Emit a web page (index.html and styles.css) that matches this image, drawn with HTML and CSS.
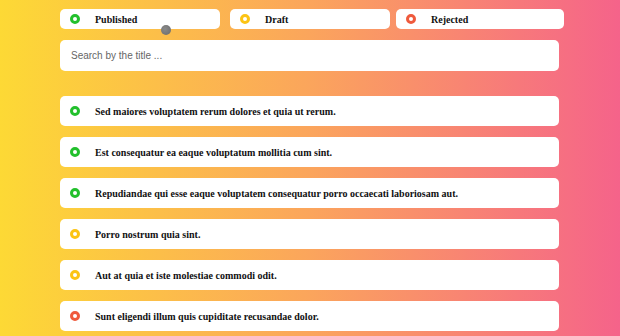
FILE: index.html
```html
<!DOCTYPE html>
<html>
<head>
<meta charset="utf-8">
<link rel="stylesheet" href="styles.css">
</head>
<body>
<div class="page">
  <div class="filters">
    <div class="filter"><span class="ring green"></span><span class="label">Published</span></div>
    <div class="filter"><span class="ring yellow"></span><span class="label">Draft</span></div>
    <div class="filter wide"><span class="ring red"></span><span class="label">Rejected</span></div>
  </div>
  <div class="search">Search by the title ...</div>
  <ul class="list">
    <li class="item"><span class="ring green"></span><span class="title">Sed maiores voluptatem rerum dolores et quia ut rerum.</span></li>
    <li class="item"><span class="ring green"></span><span class="title">Est consequatur ea eaque voluptatum mollitia cum sint.</span></li>
    <li class="item"><span class="ring green"></span><span class="title">Repudiandae qui esse eaque voluptatem consequatur porro occaecati laboriosam aut.</span></li>
    <li class="item"><span class="ring yellow"></span><span class="title">Porro nostrum quia sint.</span></li>
    <li class="item"><span class="ring yellow"></span><span class="title">Aut at quia et iste molestiae commodi odit.</span></li>
    <li class="item"><span class="ring red"></span><span class="title">Sunt eligendi illum quis cupiditate recusandae dolor.</span></li>
  </ul>
  <span class="cursor"></span>
</div>
</body>
</html>
```
FILE: styles.css
```css
html, body {
  margin: 0;
  padding: 0;
  height: 100%;
}
body {
  background: linear-gradient(to right, #fdd935 0%, #fba55c 50%, #f5638a 100%);
  font-family: "Liberation Serif", serif;
  overflow: hidden;
}
.page {
  position: relative;
  padding: 9px 0 0 60px;
}
.filters {
  display: flex;
}
.filter {
  width: 160px;
  height: 20px;
  background: #fff;
  border-radius: 5px;
  display: flex;
  align-items: center;
  padding-left: 10px;
  box-sizing: border-box;
}
.filter + .filter {
  margin-left: 10px;
}
.filter.wide {
  width: 168px;
  margin-left: 6px;
}
.label {
  font-weight: bold;
  font-size: 10px;
  color: #111;
  margin-left: 15px;
}
.ring {
  width: 10px;
  height: 10px;
  box-sizing: border-box;
  border-radius: 50%;
  border: 3px solid;
  flex: none;
}
.ring.green { border-color: #22c02c; }
.ring.yellow { border-color: #fcc414; }
.ring.red { border-color: #ef5a3d; }
.search {
  margin-top: 11px;
  width: 499px;
  height: 31px;
  background: #fff;
  border-radius: 5px;
  box-sizing: border-box;
  padding-left: 11px;
  display: flex;
  align-items: center;
  font-family: "Liberation Sans", Arial, sans-serif;
  font-size: 10px;
  color: #666;
}
.list {
  list-style: none;
  margin: 25px 0 0 0;
  padding: 0;
  display: flex;
  flex-direction: column;
  gap: 11px;
}
.item {
  width: 499px;
  height: 30px;
  background: #fff;
  border-radius: 5px;
  box-sizing: border-box;
  padding-left: 10px;
  display: flex;
  align-items: center;
}
.title {
  font-weight: bold;
  font-size: 10px;
  color: #111;
  margin-left: 15px;
}
.cursor {
  position: absolute;
  left: 161px;
  top: 25px;
  width: 10px;
  height: 10px;
  border-radius: 50%;
  background: radial-gradient(circle at 40% 40%, #8a8a8a, #6a6a6a);
}
```
